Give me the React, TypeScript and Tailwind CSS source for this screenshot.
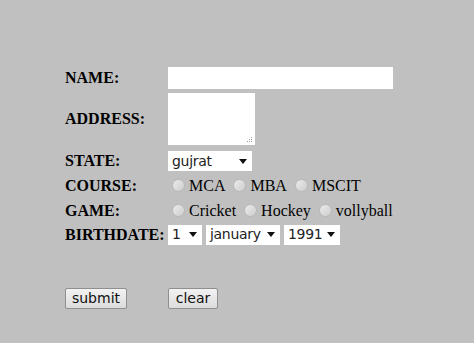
import React from "react";

const Label = ({ children }: { children: React.ReactNode }) => (
  <span className="font-bold text-[16px] text-black" style={{ fontFamily: '"Liberation Serif", serif' }}>
    {children}
  </span>
);

const Select = ({ value, w }: { value: string; w: string }) => (
  <div
    className={`${w} h-[20px] bg-white flex items-center justify-between pl-[4px] pr-[5px] text-[14px] text-[#222]`}
    style={{ fontFamily: '"DejaVu Sans", sans-serif' }}
  >
    <span className="leading-none -mt-[1px] tracking-[-0.3px]">{value}</span>
    <svg width="8" height="5" viewBox="0 0 8 5">
      <path d="M0 0h8L4 5z" fill="#111" />
    </svg>
  </div>
);

const Radio = ({ label }: { label: string }) => (
  <span className="flex items-center gap-[4px]">
    <span className="w-[13px] h-[13px] rounded-full border border-[#b9b9b9] bg-gradient-to-br from-[#ececec] to-[#cdcdcd]" />
    <span className="text-[16px] text-black" style={{ fontFamily: '"Liberation Serif", serif' }}>
      {label}
    </span>
  </span>
);

const Button = ({ children, w }: { children: React.ReactNode; w: string }) => (
  <button
    className={`${w} h-[21px] border border-[#8f8f8f] rounded-[2px] bg-gradient-to-b from-[#f2f2f2] to-[#dcdcdc] text-[14px] text-[#111] flex items-center justify-center`}
    style={{ fontFamily: '"DejaVu Sans", sans-serif' }}
  >
    {children}
  </button>
);

export default function App() {
  return (
    <div className="w-[474px] h-[343px] bg-[#c0c0c0] pl-[65px] pt-[67px]">
      <div className="grid grid-cols-[103px_auto] items-center">
        <div className="h-[22px] flex items-center"><Label>NAME:</Label></div>
        <div className="h-[22px] w-[225px] bg-white" />

        <div className="h-[52px] flex items-center mt-[4px]"><Label>ADDRESS:</Label></div>
        <div className="mt-[4px] h-[52px] w-[87px] bg-white relative">
          <svg className="absolute right-[2px] bottom-[2px]" width="7" height="7" viewBox="0 0 7 7">
            <g fill="#999">
              <rect x="5" y="1" width="1" height="1" />
              <rect x="3" y="3" width="1" height="1" />
              <rect x="5" y="3" width="1" height="1" />
              <rect x="1" y="5" width="1" height="1" />
              <rect x="3" y="5" width="1" height="1" />
              <rect x="5" y="5" width="1" height="1" />
            </g>
          </svg>
        </div>

        <div className="h-[20px] mt-[6px] flex items-center"><Label>STATE:</Label></div>
        <div className="mt-[6px]"><Select value="gujrat" w="w-[84px]" /></div>

        <div className="h-[25px] mt-[2px] flex items-center"><Label>COURSE:</Label></div>
        <div className="h-[25px] mt-[2px] flex items-center gap-[8px] pl-[4px]">
          <Radio label="MCA" />
          <Radio label="MBA" />
          <Radio label="MSCIT" />
        </div>

        <div className="h-[25px] flex items-center"><Label>GAME:</Label></div>
        <div className="h-[25px] flex items-center gap-[8px] pl-[4px]">
          <Radio label="Cricket" />
          <Radio label="Hockey" />
          <Radio label="vollyball" />
        </div>

        <div className="h-[23px] flex items-center"><Label>BIRTHDATE:</Label></div>
        <div className="h-[23px] flex items-center gap-[4px]">
          <Select value="1" w="w-[34px]" />
          <Select value="january" w="w-[74px]" />
          <Select value="1991" w="w-[56px]" />
        </div>
      </div>

      <div className="mt-[42px] flex gap-[41px]">
        <Button w="w-[62px]">submit</Button>
        <Button w="w-[50px]">clear</Button>
      </div>
    </div>
  );
}
